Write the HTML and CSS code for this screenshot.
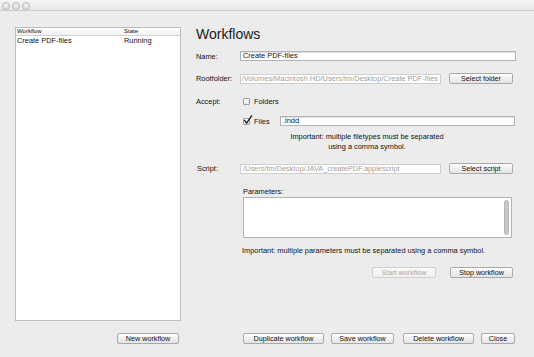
FILE: index.html
```html
<!DOCTYPE html>
<html>
<head>
<meta charset="utf-8">
<link rel="stylesheet" href="styles.css">
</head>
<body>
<div class="window">
  <div class="titlebar">
    <span class="light"></span><span class="light"></span><span class="light"></span>
  </div>
  <div class="content">
    <div class="left">
      <div class="list">
        <div class="list-head"><span>Workflow</span><span>State</span></div>
        <div class="list-row"><span>Create PDF-files</span><span>Running</span></div>
      </div>
      <div class="left-actions">
        <span class="btn w-new">New workflow</span>
      </div>
    </div>
    <div class="right">
      <h1 class="title">Workflows</h1>
      <div class="row r-name">
        <span class="label">Name:</span>
        <span class="field f-name">Create PDF-files</span>
      </div>
      <div class="row r-root">
        <span class="label">Rootfolder:</span>
        <span class="field disabled f-path f-end"><span>/Volumes/Macintosh HD/Users/tm/Desktop/Create PDF-files</span></span>
        <span class="btn w-select">Select folder</span>
      </div>
      <div class="row r-accept">
        <span class="label">Accept:</span>
        <span class="check"></span>
        <span class="check-text">Folders</span>
      </div>
      <div class="row r-files">
        <span class="label"></span>
        <span class="check checked">
          <svg class="tick" width="10" height="10" viewBox="0 0 10 10"><path d="M1.6 5.4 L3.6 8.2 L8.6 0.8" fill="none" stroke="#222" stroke-width="1.4" stroke-linecap="round" stroke-linejoin="round"/></svg>
        </span>
        <span class="check-text files-text">Files</span>
        <span class="field f-ext">.indd</span>
      </div>
      <div class="note note-types">Important: multiple filetypes must be separated<br>using a comma symbol.</div>
      <div class="row r-script">
        <span class="label">Script:</span>
        <span class="field disabled f-path">/Users/tm/Desktop/JAVA_createPDF.applescript</span>
        <span class="btn w-select">Select script</span>
      </div>
      <div class="params-label">Parameters:</div>
      <div class="textarea"><span class="scroll"></span></div>
      <div class="note-params">Important: multiple parameters must be separated using a comma symbol.</div>
      <div class="run-actions">
        <span class="btn disabled w-start">Start workflow</span>
        <span class="btn w-stop">Stop workflow</span>
      </div>
      <div class="bottom-actions">
        <span class="btn w-dup">Duplicate workflow</span>
        <span class="btn w-save">Save workflow</span>
        <span class="btn w-del">Delete workflow</span>
        <span class="btn w-close">Close</span>
      </div>
    </div>
  </div>
</div>
</body>
</html>
```

FILE: styles.css
```css
* { box-sizing: border-box; }
html, body { margin: 0; padding: 0; }
body {
  width: 534px;
  height: 357px;
  overflow: hidden;
  background: #ececec;
  font-family: "Liberation Sans", Arial, sans-serif;
  font-size: 7.4px;
  color: #111;
}
.window { width: 534px; height: 357px; background: #ececec; }
.titlebar {
  height: 11px;
  border-bottom: 1px solid #cdcdcd;
  background: linear-gradient(#f5f5f5, #e6e6e6);
  display: flex;
  gap: 2px;
  padding: 2px 0 0 2px;
}
.light {
  width: 8px; height: 8px;
  border-radius: 50%;
  border: 1px solid #b9b9b9;
  background: radial-gradient(circle at 50% 35%, #f4f4f4, #d6d6d6);
}
.content { display: flex; padding: 16px 0 0 15px; }
.left { width: 166px; display: flex; flex-direction: column; }
.list {
  height: 294px;
  background: #fff;
  border: 1px solid #bdbdbd;
}
.list-head, .list-row {
  display: grid;
  grid-template-columns: 107px 1fr;
  padding-left: 1px;
}
.list-head {
  height: 8px;
  line-height: 7px;
  font-size: 6px;
  border-bottom: 1px solid #d4d4d4;
  background: linear-gradient(#fff, #f1f1f1);
}
.list-row { height: 9px; line-height: 9px; font-size: 7.4px; }
.left-actions { display: flex; justify-content: flex-end; padding-right: 2px; margin-top: 12px; }

.btn {
  display: inline-flex;
  align-items: center;
  justify-content: center;
  height: 11px;
  border: 1px solid #a9a9a9;
  border-radius: 2px;
  background: linear-gradient(#ffffff, #f0f0f0 50%, #e4e4e4);
  font-size: 7.2px;
  color: #111;
  white-space: nowrap;
}
.btn.disabled { color: #a8a8a8; border-color: #cfcfcf; background: linear-gradient(#fbfbfb, #efefef); }
.w-new { width: 62px; }
.w-select { width: 64px; margin-left: 8px; }
.w-start { width: 64px; }
.w-stop { width: 63px; margin-left: 14px; }
.w-dup { width: 81px; }
.w-save { width: 63px; margin-left: 7px; }
.w-del { width: 71px; margin-left: 9px; }
.w-close { width: 34px; margin-left: 7px; }

.right { margin-left: 15px; width: 322px; display: flex; flex-direction: column; }
.title { margin: 0; font-size: 14px; line-height: 14px; font-weight: normal; color: #1a1a1a; }
.row { display: flex; align-items: center; }
.label { width: 44px; flex: none; }
.field {
  height: 10px;
  line-height: 8px;
  border: 1px solid #b3b3b3;
  background: #fff;
  padding-left: 2px;
  overflow: hidden;
  white-space: nowrap;
  font-size: 7.4px;
  box-shadow: inset 0 1px 0 #e2e2e2;
}
.field.disabled { color: #a0a0a0; border-color: #cecece; box-shadow: none; }
.f-end { display: flex; justify-content: flex-end; padding-right: 2px; }
.f-end > span { flex: none; }
.r-name { margin-top: 10px; height: 10px; }
.f-name { width: 276px; }
.r-root { margin-top: 12px; height: 11px; }
.f-path { width: 201px; }
.r-accept { margin-top: 13px; height: 8px; }
.check {
  position: relative;
  width: 7px; height: 7px;
  margin-left: 3px;
  border: 1px solid #9d9d9d;
  border-radius: 1px;
  background: linear-gradient(#fff, #e9e9e9);
  flex: none;
}
.tick { position: absolute; left: -1px; top: -4px; }
.check-text { margin-left: 4px; }
.r-files { margin-top: 11px; height: 10px; }
.files-text { width: 26px; }
.f-ext { width: 235px; }
.note { margin-top: 6px; margin-left: 44px; width: 254px; text-align: center; line-height: 10px; }
.r-script { margin-top: 11px; height: 11px; }
.r-script .label { padding-left: 1px; }
.params-label { margin-top: 13px; margin-left: 47px; line-height: 10px; }
.textarea {
  position: relative;
  margin-left: 47px;
  width: 269px;
  height: 41px;
  border: 1px solid #b3b3b3;
  background: #fff;
}
.scroll {
  position: absolute;
  right: 2px; top: 2px;
  width: 5px; height: 35px;
  border-radius: 3px;
  background: #c9c9c9;
  border: 1px solid #b5b5b5;
}
.note-params { margin-top: 8px; margin-left: 46px; line-height: 10px; }
.run-actions { margin-top: 11px; display: flex; justify-content: flex-end; padding-right: 5px; }
.bottom-actions { margin-top: 55px; display: flex; justify-content: flex-end; padding-right: 3px; }
```
